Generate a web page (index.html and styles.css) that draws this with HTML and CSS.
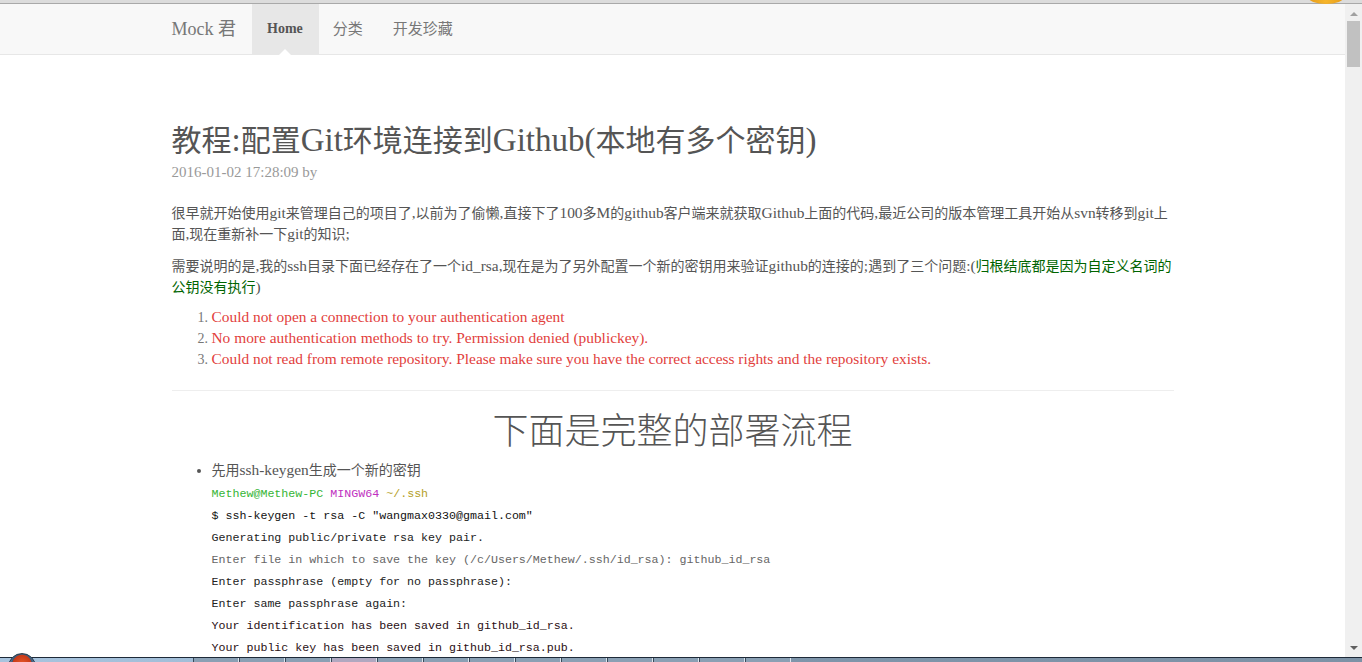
FILE: index.html
```html
<!DOCTYPE html>
<html lang="zh-CN">
<head>
<meta charset="utf-8">
<title>教程:配置Git环境连接到Github(本地有多个密钥)</title>
<link rel="stylesheet" href="styles.css">
</head>
<body>
<div class="topstrip"></div>
<div class="browser-icon"></div>
<div class="window">
  <div class="page">
    <nav class="navbar">
      <div class="container nav-inner">
        <a class="brand">Mock 君</a>
        <ul class="nav">
          <li class="active"><a>Home</a></li>
          <li><a>分类</a></li>
          <li><a>开发珍藏</a></li>
        </ul>
      </div>
    </nav>
    <main class="container content">
      <h1 class="title">教程<span class="en">:</span>配置<span class="en">Git</span>环境连接到<span class="en">Github(</span>本地有多个密钥<span class="en">)</span></h1>
      <div class="meta">2016-01-02 17:28:09 by</div>
      <p class="para">很早就开始使用<span class="en">git</span>来管理自己的项目了<span class="en">,</span>以前为了偷懒<span class="en">,</span>直接下了<span class="en">100</span>多<span class="en">M</span>的<span class="en">github</span>客户端来就获取<span class="en">Github</span>上面的代码<span class="en">,</span>最近公司的版本管理工具开始从<span class="en">svn</span>转移到<span class="en">git</span>上面<span class="en">,</span>现在重新补一下<span class="en">git</span>的知识<span class="en">;</span></p>
      <p class="para">需要说明的是<span class="en">,</span>我的<span class="en">ssh</span>目录下面已经存在了一个<span class="en">id_rsa,</span>现在是为了另外配置一个新的密钥用来验证<span class="en">github</span>的连接的<span class="en">;</span>遇到了三个问题<span class="en">:(</span><span class="green">归根结底都是因为自定义名词的公钥没有执行</span><span class="en">)</span></p>
      <ol class="errors">
        <li><span class="red">Could not open a connection to your authentication agent</span></li>
        <li><span class="red">No more authentication methods to try. Permission denied (publickey).</span></li>
        <li><span class="red">Could not read from remote repository. Please make sure you have the correct access rights and the repository exists.</span></li>
      </ol>
      <hr class="rule">
      <h2 class="section">下面是完整的部署流程</h2>
      <ul class="steps">
        <li>先用<span class="en">ssh-keygen</span>生成一个新的密钥
          <div class="code">
            <div class="line"><span class="c-green">Methew@Methew-PC</span> <span class="c-mag">MINGW64</span> <span class="c-yel">~/.ssh</span></div>
            <div class="line c-black">$ ssh-keygen -t rsa -C "wangmax0330@gmail.com"</div>
            <div class="line c-dark">Generating public/private rsa key pair.</div>
            <div class="line c-gray">Enter file in which to save the key (/c/Users/Methew/.ssh/id_rsa): github_id_rsa</div>
            <div class="line c-dark">Enter passphrase (empty for no passphrase):</div>
            <div class="line c-dark">Enter same passphrase again:</div>
            <div class="line c-maroon">Your identification has been saved in github_id_rsa.</div>
            <div class="line c-maroon">Your public key has been saved in github_id_rsa.pub.</div>
          </div>
        </li>
      </ul>
    </main>
  </div>
  <div class="scrollbar">
    <div class="arrow-up"></div>
    <div class="thumb"></div>
    <div class="track"></div>
    <div class="arrow-down"></div>
  </div>
</div>
<div class="taskbar">
  <div class="orb"></div>
  <div class="tasks">
    <div class="task"></div><div class="task"></div><div class="task"></div><div class="task current"></div><div class="task"></div><div class="task"></div><div class="task"></div><div class="task"></div><div class="task"></div><div class="task"></div><div class="task"></div><div class="task"></div><div class="task"></div>
  </div>
</div>
</body>
</html>
```

FILE: styles.css
```css
html, body {
  margin: 0;
  padding: 0;
  height: 100%;
  overflow: hidden;
  background: #ffffff;
}
body {
  font-family: "Liberation Serif", "Noto Sans CJK SC", serif;
  font-size: 14px;
  color: #555;
  position: relative;
}
.topstrip {
  height: 3px;
  background: #dcdcdc;
  border-bottom: 1px solid #a9a9a9;
}
.browser-icon {
  position: absolute;
  left: 1308px;
  top: -10px;
  width: 36px;
  height: 14px;
  border-radius: 50%;
  background: radial-gradient(ellipse at 50% 80%, #f6b62c, #e09010);
}
.window {
  display: flex;
  height: 653px;
}
.page {
  flex: 1;
  overflow: hidden;
}
.container {
  width: 1002px;
  margin: 0 auto;
}
.navbar {
  background: #f8f8f8;
  border-bottom: 1px solid #e7e7e7;
  height: 50px;
}
.nav-inner {
  display: flex;
  align-items: stretch;
  height: 50px;
}
.brand {
  font-size: 18px;
  line-height: 50px;
  color: #777;
  padding-right: 16px;
}
.nav {
  display: flex;
  list-style: none;
  margin: 0;
  padding: 0;
}
.nav li {
  position: relative;
  display: flex;
}
.nav li a {
  line-height: 50px;
  padding: 0 15px;
  color: #777;
  font-size: 15px;
}
.nav li:nth-child(2) a { padding-left: 14px; }
.nav li.active a {
  background: #e7e7e7;
  color: #555;
  font-size: 14px;
  font-weight: bold;
  padding: 0 16px 0 15px;
}
.nav li.active::after {
  content: "";
  position: absolute;
  left: 50%;
  bottom: -1px;
  margin-left: -6px;
  border-left: 6px solid transparent;
  border-right: 6px solid transparent;
  border-bottom: 6px solid #ffffff;
}
.content {
  padding-top: 69px;
}
.en {
  font-size: 1.1em;
  line-height: 1;
}
.title {
  margin: 0;
  font-weight: normal;
  font-size: 30px;
  line-height: 34px;
  color: #555;
}
.meta {
  margin-top: 4px;
  font-size: 15px;
  line-height: 20px;
  color: #999;
}
.para {
  margin: 21px 0 11px;
  line-height: 21px;
}
.para + .para {
  margin-top: 0;
  margin-bottom: 9px;
}
.green { color: #006400; }
.errors {
  margin: 0 0 20px;
  padding-left: 40px;
  line-height: 21px;
  color: #777;
}
.red {
  color: #e2403c;
  font-size: 1.1em;
  line-height: 1;
}
.rule {
  border: 0;
  border-top: 1px solid #eeeeee;
  margin: 0 0 21px;
}
.section {
  margin: 0 0 8px;
  text-align: center;
  font-weight: 300;
  font-size: 36px;
  line-height: 40px;
  color: #555;
}
.steps {
  margin: 0;
  padding-left: 40px;
  line-height: 21px;
}
.code {
  margin-top: 2px;
  font-family: "Liberation Mono", "DejaVu Sans Mono", monospace;
  font-size: 11.65px;
  line-height: 22px;
}
.line { white-space: pre; }
.c-green { color: #35b535; }
.c-mag { color: #c030c0; }
.c-yel { color: #b5a028; }
.c-black { color: #111; }
.c-dark { color: #222; }
.c-gray { color: #666; }
.c-maroon { color: #2a0f14; }
.scrollbar {
  width: 17px;
  background: #f0f0f0;
  display: flex;
  flex-direction: column;
  align-items: center;
}
.arrow-up {
  margin-top: 8px;
  width: 0;
  height: 0;
  border-left: 4px solid transparent;
  border-right: 4px solid transparent;
  border-bottom: 4px solid #a0a0a0;
}
.thumb {
  margin-top: 5px;
  width: 13px;
  height: 46px;
  background: #c1c1c1;
}
.track { flex: 1; }
.arrow-down {
  margin-bottom: 7px;
  width: 0;
  height: 0;
  border-left: 4px solid transparent;
  border-right: 4px solid transparent;
  border-top: 4px solid #606060;
}
.taskbar {
  height: 4px;
  border-top: 1px solid #1e2a38;
  background: linear-gradient(to right, #a8c4de 0%, #9cb8d2 28%, #7f97ad 35%, #7d92a6 100%);
  display: flex;
  position: relative;
}
.orb {
  position: absolute;
  left: 8px;
  top: -5px;
  width: 26px;
  height: 26px;
  border-radius: 50%;
  background: radial-gradient(circle at 50% 40%, #e85a2a 0, #c83a18 45%, #3a5a7a 50%, #587a9a 60%);
  border: 1px solid #2a3a4a;
}
.tasks {
  display: flex;
  margin-left: 193px;
}
.task {
  width: 44px;
  height: 4px;
  border-left: 1px solid #3a4a5a;
  border-right: 1px solid #dde6ee;
  background: #8aa0b4;
}
.task.current { background: #b0a8c0; }
```
